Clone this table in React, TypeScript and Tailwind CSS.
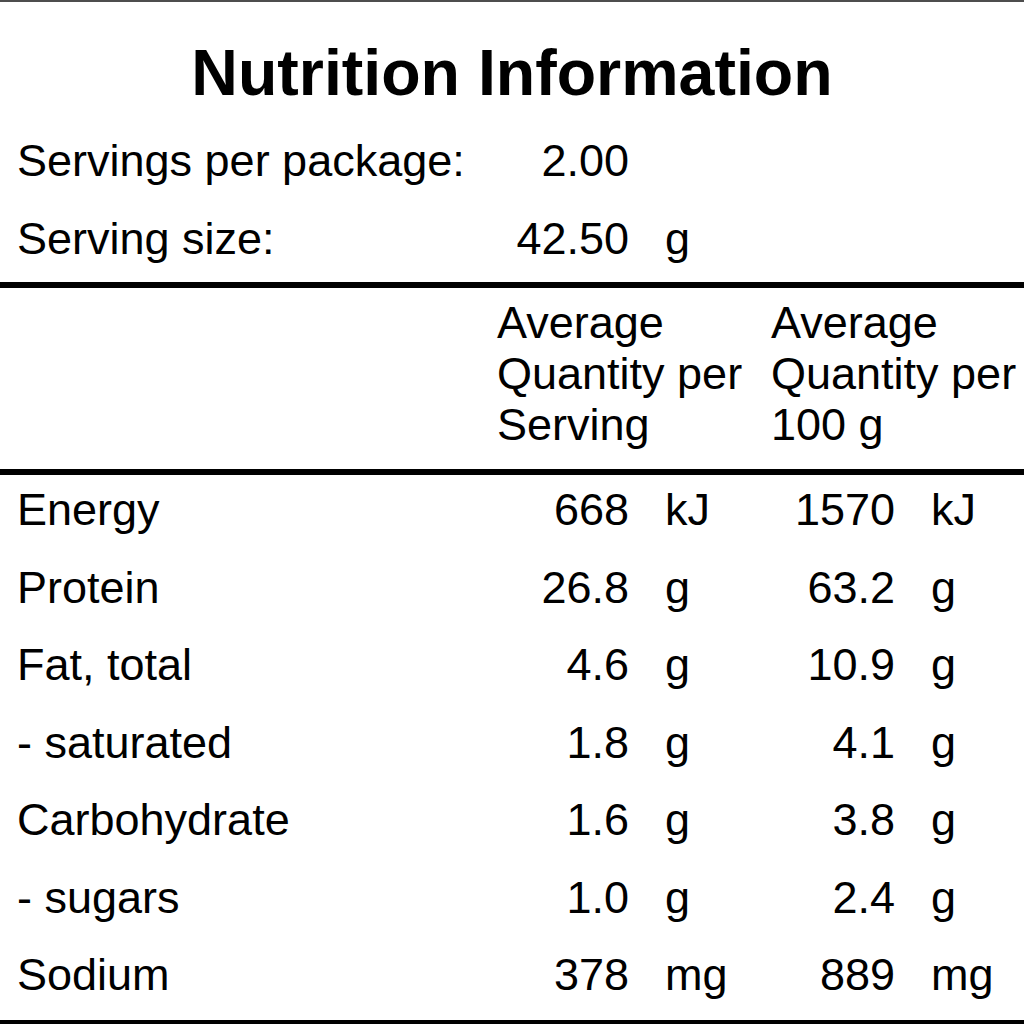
const rows = [
  { name: 'Energy', a: '668', au: 'kJ', b: '1570', bu: 'kJ' },
  { name: 'Protein', a: '26.8', au: 'g', b: '63.2', bu: 'g' },
  { name: 'Fat, total', a: '4.6', au: 'g', b: '10.9', bu: 'g' },
  { name: '- saturated', a: '1.8', au: 'g', b: '4.1', bu: 'g' },
  { name: 'Carbohydrate', a: '1.6', au: 'g', b: '3.8', bu: 'g' },
  { name: '- sugars', a: '1.0', au: 'g', b: '2.4', bu: 'g' },
  { name: 'Sodium', a: '378', au: 'mg', b: '889', bu: 'mg' },
];

const grid = 'grid grid-cols-[463px_149px_142px_124px_1fr] pl-[17px]';

export default function App() {
  return (
    <div className="flex h-[1024px] w-[1024px] flex-col overflow-hidden border-t-2 border-[#4d4d4d] bg-white font-['Liberation_Sans',Arial,sans-serif] text-black">
      <h1 className="mt-[39px] text-center text-[64.5px] font-bold leading-[64px]">Nutrition Information</h1>

      <div className={`${grid} mt-[17px] text-[45px] leading-[78px]`}>
        <div>Servings per package:</div>
        <div className="text-right">2.00</div>
        <div />
        <div />
        <div />
        <div>Serving size:</div>
        <div className="text-right">42.50</div>
        <div className="pl-[36px]">g</div>
        <div />
        <div />
      </div>

      <div className="mt-[4px] h-[6px] bg-black" />

      <div className={`${grid} pt-[9px] text-[45px] leading-[51px]`}>
        <div />
        <div className="col-span-2 pl-[17px]">
          Average
          <br />
          Quantity per
          <br />
          Serving
        </div>
        <div className="col-span-2 whitespace-nowrap">
          Average
          <br />
          Quantity per
          <br />
          100 g
        </div>
      </div>

      <div className="mt-[19px] h-[6px] bg-black" />

      <div className={`${grid} -mt-[4px] text-[45px] leading-[77.5px]`}>
        {rows.map((r) => (
          <div key={r.name} className="contents">
            <div>{r.name}</div>
            <div className="text-right">{r.a}</div>
            <div className="pl-[36px]">{r.au}</div>
            <div className="text-right">{r.b}</div>
            <div className="pl-[36px]">{r.bu}</div>
          </div>
        ))}
      </div>

      <div className="mt-auto h-[4px] shrink-0 bg-black" />
    </div>
  );
}
